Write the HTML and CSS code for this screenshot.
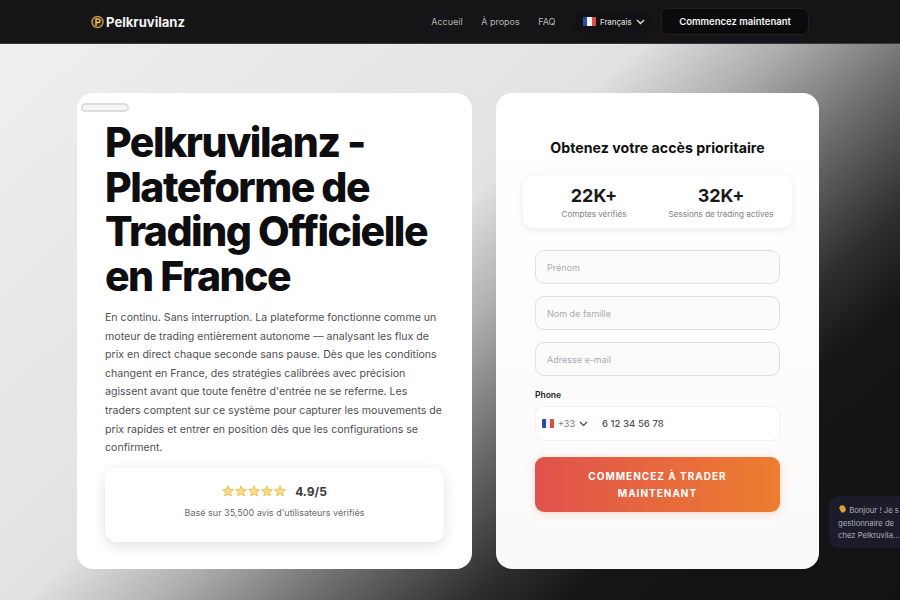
FILE: index.html
```html
<!DOCTYPE html>
<html lang="fr">
<head>
  <meta charset="UTF-8" />
  <title>Pelkruvilanz</title>
  <meta name="viewport" content="width=device-width, initial-scale=1.0" />
  <link rel="stylesheet" href="styles.css">
</head>
<body>
  <div class="topbar">
    <div class="brand">
      <svg class="brand-logo" width="13" height="14" viewBox="0 0 13 14">
        <circle cx="6.500" cy="7" r="5.500" fill="#3a2608" stroke="#c8963e" stroke-width="1.400" />
        <path d="M5 11V3.800h2.200a1.800 1.800 0 0 1 0 3.700H5" fill="none" stroke="#f0cf85" stroke-width="1.300" />
      </svg>
      <span>Pelkruvilanz</span>
    </div>
    <div class="topbar-right">
      <a class="nav-link">Accueil</a>
      <a class="nav-link">À propos</a>
      <a class="nav-link">FAQ</a>
      <div class="lang">
        <span class="flag flag-lang"><i></i><i></i><i></i></span>
        <span>Français</span>
        <svg width="9" height="6" viewBox="0 0 9 6"><path d="M1 1l3.500 3.500L8 1" fill="none" stroke="#e8e8e8" stroke-width="1.300" /></svg>
      </div>
      <button class="cta">Commencez maintenant</button>
    </div>
  </div>

  <div class="main">
    <div class="hero-card">
      <span class="pill"></span>
      <h1>Pelkruvilanz - Plateforme de Trading Officielle en France</h1>
      <p class="intro">En continu. Sans interruption. La plateforme fonctionne comme un moteur de trading entièrement autonome — analysant les flux de prix en direct chaque seconde sans pause. Dès que les conditions changent en France, des stratégies calibrées avec précision agissent avant que toute fenêtre d'entrée ne se referme. Les traders comptent sur ce système pour capturer les mouvements de prix rapides et entrer en position dès que les configurations se confirment.</p>
      <div class="rating">
        <div class="rating-top">
          <div class="stars">
            <svg width="12" height="12" viewBox="0 0 24 24"><path class="star" d="M12 1.500l3.200 7 7.600.8-5.700 5.100 1.600 7.500-6.700-3.800-6.700 3.800 1.600-7.500L1.200 9.300l7.600-.8z" /></svg>
            <svg width="12" height="12" viewBox="0 0 24 24"><path class="star" d="M12 1.500l3.200 7 7.600.8-5.700 5.100 1.600 7.500-6.700-3.800-6.700 3.800 1.600-7.500L1.200 9.300l7.600-.8z" /></svg>
            <svg width="12" height="12" viewBox="0 0 24 24"><path class="star" d="M12 1.500l3.200 7 7.600.8-5.700 5.100 1.600 7.500-6.700-3.800-6.700 3.800 1.600-7.500L1.200 9.300l7.600-.8z" /></svg>
            <svg width="12" height="12" viewBox="0 0 24 24"><path class="star" d="M12 1.500l3.200 7 7.600.8-5.700 5.100 1.600 7.500-6.700-3.800-6.700 3.800 1.600-7.500L1.200 9.300l7.600-.8z" /></svg>
            <svg width="12" height="12" viewBox="0 0 24 24"><path class="star" d="M12 1.500l3.200 7 7.600.8-5.700 5.100 1.600 7.500-6.700-3.800-6.700 3.800 1.600-7.500L1.200 9.300l7.600-.8z" /></svg>
          </div>
          <strong>4.9/5</strong>
        </div>
        <p>Basé sur 35,500 avis d'utilisateurs vérifiés</p>
      </div>
    </div>

    <div class="form-card">
      <h2>Obtenez votre accès prioritaire</h2>
      <div class="stats">
        <div class="stat">
          <b>22K+</b>
          <span>Comptes vérifiés</span>
        </div>
        <div class="stat">
          <b>32K+</b>
          <span>Sessions de trading actives</span>
        </div>
      </div>
      <form class="signup">
        <div class="field">Prénom</div>
        <div class="field">Nom de famille</div>
        <div class="field">Adresse e-mail</div>
        <label class="phone-label">Phone</label>
        <div class="phone">
          <span class="flag flag-phone"><i></i><i></i><i></i></span>
          <span class="dial">+33</span>
          <svg width="9" height="6" viewBox="0 0 9 6"><path d="M1 1l3.500 3.500L8 1" fill="none" stroke="#444" stroke-width="1.200" /></svg>
          <span class="phone-num">6 12 34 56 78</span>
        </div>
        <button class="submit" type="button">Commencez à trader maintenant</button>
      </form>
    </div>
  </div>

  <div class="chat">
    <div><svg width="9" height="9" viewBox="0 0 9 9"><path d="M1 4l2-3 1 1 1-1 2 2 1 3-2 2.500H3.500z" fill="#d9a53a" /></svg> Bonjour ! Je s</div>
    <div>gestionnaire de</div>
    <div>chez Pelkruvila...</div>
  </div>
</body>
</html>
```

FILE: styles.css
```css
html, body {
  height: 100%;
}

body {
  margin: 0;
  font-family: 'Inter', 'Liberation Sans', sans-serif;
  background: linear-gradient(138deg, #f0f0f2 0%, #e2e2e5 44%, #b0b0b0 52.800%, #6e6e6e 62.300%, #2e2e2e 72.500%, #151515 79%, #121214 100%);
  color: #111;
  overflow: hidden;
  position: relative;
}

.topbar {
  display: flex;
  justify-content: space-between;
  align-items: center;
  height: 43px;
  padding: 0 91px;
  background: #151517;
  border-bottom: 1px solid #3a3a3c;
}

.brand {
  display: flex;
  align-items: center;
  gap: 2px;
  font-size: 13.100px;
  font-weight: 700;
  color: #f2f2f2;
}

.topbar-right {
  display: flex;
  align-items: center;
}

.nav-link {
  font-size: 9px;
  color: #b4b4b4;
  margin-right: 18.500px;
}

.lang {
  display: flex;
  align-items: center;
  gap: 4px;
  width: 75px;
  height: 22px;
  box-sizing: border-box;
  padding: 0 5px 0 8px;
  margin: 0 11px 0 1px;
  border-radius: 8px;
  background: #121214;
  font-size: 7.800px;
  font-weight: 500;
  color: #d8d8d8;
}

.flag {
  display: flex;
  overflow: hidden;
}

.flag i {
  flex: 1;
}

.flag i:nth-child(1) { background: #2a4aa8; }
.flag i:nth-child(2) { background: #f4f4f4; }
.flag i:nth-child(3) { background: #e04a4a; }

.flag-lang {
  width: 13px;
  height: 9px;
}

.flag-phone {
  width: 12px;
  height: 9px;
  border-radius: 1px;
}

.cta {
  width: 148px;
  height: 27px;
  border: 1px solid #2a1d18;
  border-radius: 7px;
  background: #0b0b0d;
  color: #f4f4f4;
  font-family: inherit;
  font-size: 9.500px;
  font-weight: 600;
}

.main {
  display: grid;
  grid-template-columns: 395px 323px;
  gap: 24px;
  margin: 49px 0 0 77px;
  width: 742px;
}

.hero-card,
.form-card {
  background: #fff;
  border-radius: 16px;
  height: 476px;
  box-sizing: border-box;
}

.hero-card {
  position: relative;
  padding: 27px 28px;
}

.pill {
  position: absolute;
  left: 4px;
  top: 10px;
  width: 48px;
  height: 9px;
  box-sizing: border-box;
  border: 2px solid #dedee0;
  border-radius: 5px;
  background: #f5f5f6;
}

h1 {
  margin: 0;
  font-size: 41px;
  line-height: 44.500px;
  font-weight: 800;
  letter-spacing: -1.500px;
  color: #0e0e10;
}

.intro {
  margin: 11px 0 0;
  font-size: 10.600px;
  line-height: 18.600px;
  color: #505054;
}

.rating {
  margin-top: 10px;
  height: 74px;
  box-sizing: border-box;
  padding-top: 16px;
  border-radius: 12px;
  background: #fff;
  box-shadow: 0 4px 14px rgba(0, 0, 0, 0.12);
  text-align: center;
}

.rating-top {
  display: flex;
  justify-content: center;
  align-items: center;
  gap: 9px;
}

.stars {
  display: flex;
  gap: 1px;
}

.star {
  fill: #f8dc80;
  stroke: #e6b648;
  stroke-width: 1.500;
}

.rating strong {
  font-size: 12px;
  font-weight: 700;
  color: #3a3a3c;
}

.rating p {
  margin: 8px 0 0;
  font-size: 9px;
  color: #6a6a6e;
}

.form-card {
  padding: 46px 27px 0;
  background: linear-gradient(180deg, #fff, #fafafa);
}

h2 {
  margin: 0;
  font-size: 14.200px;
  line-height: 18px;
  font-weight: 700;
  text-align: center;
  color: #111;
}

.stats {
  display: grid;
  grid-template-columns: 127px 127px;
  justify-content: center;
  height: 53px;
  margin-top: 18px;
  border-radius: 10px;
  background: #fff;
  box-shadow: 0 2px 8px rgba(0, 0, 0, 0.08);
  text-align: center;
}

.stat {
  display: flex;
  flex-direction: column;
  align-items: center;
  padding-top: 10px;
}

.stat b {
  font-size: 18px;
  line-height: 22px;
  font-weight: 700;
  color: #1a1a1c;
}

.stat span {
  font-size: 8.100px;
  line-height: 14px;
  white-space: nowrap;
  color: #808084;
}

.signup {
  display: flex;
  flex-direction: column;
  margin: 22px 12px 0;
}

.field {
  display: flex;
  align-items: center;
  height: 34px;
  box-sizing: border-box;
  margin-bottom: 12px;
  padding-left: 11px;
  border: 1px solid #e0e0e2;
  border-radius: 9px;
  background: #fbfbfb;
  font-size: 9px;
  color: #aaaaae;
}

.phone-label {
  margin-top: 1px;
  font-size: 8.500px;
  line-height: 12px;
  font-weight: 600;
  color: #222;
}

.phone {
  display: flex;
  align-items: center;
  gap: 4px;
  height: 35px;
  box-sizing: border-box;
  margin-top: 5px;
  padding-left: 6px;
  border: 1px solid #f0f0f0;
  border-radius: 9px;
  background: #fff;
  font-size: 9px;
}

.dial {
  color: #77777b;
}

.phone-num {
  margin-left: 10px;
  font-size: 9.600px;
  font-weight: 500;
  color: #555;
}

.submit {
  height: 55px;
  margin-top: 16px;
  padding: 0 30px;
  border: none;
  border-radius: 9px;
  background: linear-gradient(90deg, #e0524c, #ed7e30);
  box-shadow: 0 2px 8px rgba(230, 110, 60, 0.25);
  color: #fff;
  font-family: inherit;
  font-size: 10px;
  line-height: 17px;
  font-weight: 700;
  letter-spacing: 1px;
  text-transform: uppercase;
}

.chat {
  position: absolute;
  left: 829px;
  top: 496px;
  width: 71px;
  height: 52px;
  box-sizing: border-box;
  padding: 8px 0 8px 9px;
  border-radius: 9px 0 0 9px;
  background: #1b1b2a;
  font-size: 7.700px;
  line-height: 12.500px;
  color: #b0b0b8;
  white-space: nowrap;
}
```
